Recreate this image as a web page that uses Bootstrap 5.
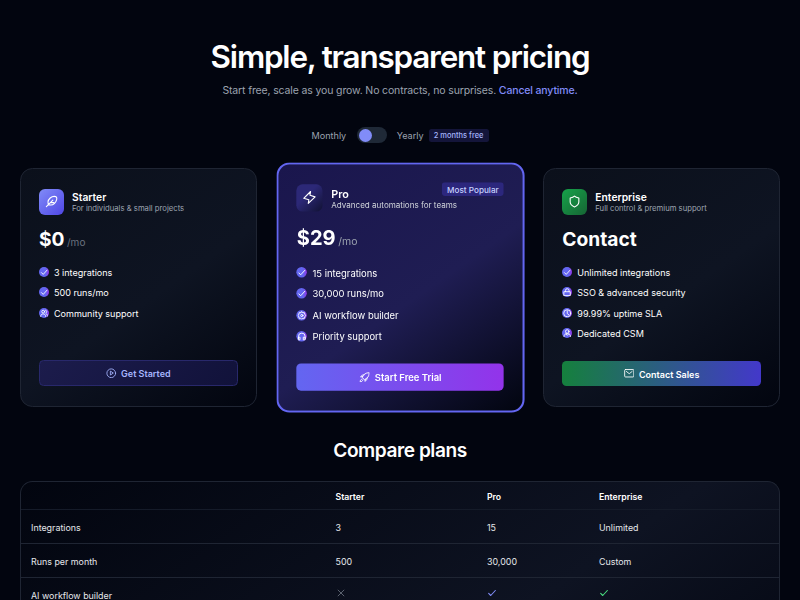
<!DOCTYPE html>
<html lang="en">
<head>
<meta charset="utf-8">
<meta name="viewport" content="width=device-width, initial-scale=1">
<title>Pricing</title>
<link href="https://cdn.jsdelivr.net/npm/bootstrap@5.3.0/dist/css/bootstrap.min.css" rel="stylesheet">
<style>
body{font-family:Inter,"Liberation Sans",sans-serif;background:#02050f;color:#fff;height:600px;font-size:9.4px;line-height:14px}
.page{width:760px}
h1{font-size:31.4px;line-height:38px;font-weight:600;letter-spacing:-1.18px;padding-top:38px}
.intro{font-size:10.5px;line-height:16px;letter-spacing:-.14px;color:#9ca3af;margin-top:7px}
.intro span{color:#818cf8;font-weight:500}
.billing{margin-top:28px;height:16px;font-size:9.1px;color:#9ca3af}
.billing>span:not(.save){padding-top:1px}
.switch{width:30px;height:16px;border-radius:8px;background:#1f2937;padding:1.5px 2px;margin:0 10px 0 10.5px}
.knob{width:13px;height:13px;border-radius:50%;background:#818cf8}
.save{font-size:7.5px;line-height:13px;font-weight:500;color:#a5b4fc;background:#14153a;border-radius:2.5px;padding:0 5px;margin-left:5px}
.plans{display:grid;grid-template-columns:repeat(3,1fr);gap:25px;margin-top:25px}
.plan{height:239px;border:1px solid #1f2533;border-radius:12.5px;background:linear-gradient(145deg,#0b101b 0%,#0e1422 55%,#02050f 100%);padding:20px 18px}
.plan-pro{position:relative;transform:scale(1.047);border:2px solid #6366f1;background:linear-gradient(145deg,#1a164d 0%,#1f1d53 55%,#02050f 100%);padding:19px 17.4px}
.tile{width:25px;height:25.5px;border-radius:6px;margin-right:8px}
.tile svg{width:13px;height:13px}
.t-starter{background:linear-gradient(135deg,#818cf8,#4f46e5)}
.t-pro{background:linear-gradient(135deg,#2c2877 40%,#111233)}
.t-ent{background:linear-gradient(135deg,#16a34a,#166534)}
.plan-name{font-size:10.3px;line-height:13px;font-weight:600;padding-top:2px}
.plan-sub{font-size:7.7px;line-height:10px;color:#9ca3af;padding-top:.3px}
.plan-pro .plan-name{padding-top:2.6px}
.plan-pro .plan-sub{color:#d1d5db}
.price{font-size:19.2px;line-height:24px;height:24px;font-weight:700;margin-top:12px}
.plan-pro .price{margin-top:13.2px}
.price small{font-size:10px;line-height:1;font-weight:400;color:#6b7280;margin-left:2.5px}
.plan-pro .price small{color:#9ca3af}
.feats{margin:15.5px 0 0}
.plan-pro .feats{margin-top:15px}
.feats li{height:20.4px;line-height:14px;font-size:9.02px}
.dot{width:10px;height:10px;border-radius:50%;background:linear-gradient(90deg,#6366f1 65%,#9333ea);margin-right:5px;margin-top:1px;flex:none}
.dot svg{width:8.5px;height:8.5px;stroke-width:2.5}
.cta{height:26px;border-radius:4.5px;font-size:9px;font-weight:600;line-height:14px;width:100%;padding:2px 0 0;color:#fff;border:0}
.cta svg{width:10.5px;height:10.5px;margin-right:4.5px;margin-top:-2px}
.cta-s{background:linear-gradient(135deg,#1c1c4c,#11123a);border:1px solid #28286b;color:#a5b4fc}
.cta-p{background:linear-gradient(90deg,#6366f1,#9333ea)}
.cta-e{background:linear-gradient(90deg,#15803d,#4338ca);height:25px}
.popular{position:absolute;right:17.4px;top:17px;font-size:7.8px;line-height:12px;padding:.5px 5px 0;height:13px;font-weight:500;color:#c7d2fe;background:#2c277d;border-radius:3px}
h2{font-size:19.1px;line-height:24px;font-weight:600;letter-spacing:-.45px;margin:31px 0 19px}
.compare{border:1px solid #1f2533;border-radius:12.5px 12.5px 0 0;border-bottom:0;height:130px;background:linear-gradient(145deg,#02050f 0%,#0e1322 60%,#02050f 100%) 0 0/100% 270px no-repeat}
.line{display:grid;grid-template-columns:304.5px 151.5px 112px 1fr;padding-left:10px;height:34px;padding-top:11px;border-bottom:1px solid #1f2533;font-size:8.9px;line-height:13px;color:#e5e7eb}
.line.head{height:28px;padding-top:8px;line-height:14px;font-weight:600;border-color:#151b29;color:#fff;font-size:8.7px}
svg{fill:none;stroke:currentColor;stroke-width:2;stroke-linecap:round;stroke-linejoin:round}
.line svg{width:10px;height:10px;display:block;margin-top:-1px;stroke-width:2.6}
.line .no svg{stroke:#6b7280;stroke-width:2}
.line .yes-pro svg{stroke:#818cf8}
.line .yes-ent svg{stroke:#4ade80}
</style>
<script src="https://cdn.jsdelivr.net/npm/bootstrap@5.3.0/dist/js/bootstrap.bundle.min.js"></script>
</head>
<body class="overflow-hidden">
<svg class="d-none">
<symbol id="check" viewBox="0 0 24 24"><path d="M4 13l5 5L20 6"/></symbol>
<symbol id="feather" viewBox="0 0 24 24"><path d="M2.500 21.500L14.500 9.500M6 18l-.5-5C6 7 12 2.500 17 2.500c4 0 5.500 2 4.500 6C20 14.500 15 18.500 11 18.500L6 18M10 14h6.500"/></symbol>
<symbol id="bolt" viewBox="0 0 24 24"><path d="M14 1.500L2 13.500l9 2.500-1 6.500L22 11l-9-3z"/></symbol>
<symbol id="shield" viewBox="0 0 24 24"><path d="M12 2c2 2 5 3 8 3.500V13c0 4.500-3.500 7-8 9-4.500-2-8-4.500-8-9V5.500C7 5 10 4 12 2z"/></symbol>
<symbol id="users" viewBox="0 0 24 24"><circle cx="9" cy="7.500" r="4"/><path d="M2 21c0-5 3-7 7-7s7 2 7 7M15.500 3.500c5 0 5 7 1 8M18 14c3 1 4 3 4 6"/></symbol>
<symbol id="gear" viewBox="0 0 24 24"><path d="M12 2l3 2.500 4-.2 1 4 2 3.700-2 3.700-1 4-4-.2L12 22l-3-2.500-4 .2-1-4L2 12l2-3.700 1-4 4 .2z"/><circle cx="12" cy="12" r="3"/></symbol>
<symbol id="phones" viewBox="0 0 24 24"><path d="M3 18v-6a9 9 0 0118 0v6M3 14h4v7H3zM17 14h4v7h-4z"/></symbol>
<symbol id="lock" viewBox="0 0 24 24"><path d="M3.500 10.500h17v11h-17zM7 10V7a5 5 0 0110 0v3"/></symbol>
<symbol id="clock" viewBox="0 0 24 24"><circle cx="12" cy="12" r="10"/><path d="M12 5v8l4 3"/></symbol>
<symbol id="agent" viewBox="0 0 24 24"><circle cx="12" cy="7" r="5"/><path d="M3 21c0-5 3-8 9-8s9 3 9 8M8 14l4 4 4-4"/></symbol>
<symbol id="play" viewBox="0 0 24 24"><circle cx="12" cy="12" r="10"/><path d="M10 8v8l6-4z"/></symbol>
<symbol id="rocket" viewBox="0 0 24 24"><path d="M9 15l-2-3C9.500 6 14 2 22 2c0 8-4 12.500-10 15zM7.500 10.500L3 11.500 7 7l4-.5M13.500 16.500L12.500 21l4.500-4 .5-4M6 16c-3 1-4 3-4 6 3 0 5-1 6-4"/></symbol>
<symbol id="mail" viewBox="0 0 24 24"><rect x="1.500" y="3.500" width="21" height="17" rx="2"/><path d="M5.500 8l6.500 5 6.500-5"/></symbol>
<symbol id="cross" viewBox="0 0 24 24"><path d="M5 5l14 14M19 5L5 19"/></symbol>
</svg>
<main class="page mx-auto">
<header class="text-center">
<h1 class="mb-0">Simple, transparent pricing</h1>
<p class="intro mb-0">Start free, scale as you grow. No contracts, no surprises. <span>Cancel anytime.</span></p>
<div class="billing d-flex justify-content-center align-items-center"><span>Monthly</span><div class="switch"><div class="knob"></div></div><span>Yearly</span><span class="save">2 months free</span></div>
</header>
<section class="plans">
<article class="plan d-flex flex-column">
<div class="d-flex"><div class="tile t-starter d-flex align-items-center justify-content-center"><svg><use href="#feather"/></svg></div><div><div class="plan-name">Starter</div><div class="plan-sub">For individuals &amp; small projects</div></div></div>
<div class="price">$0<small>/mo</small></div>
<ul class="feats list-unstyled">
<li class="d-flex"><span class="dot d-flex align-items-center justify-content-center"><svg><use href="#check"/></svg></span>3 integrations</li>
<li class="d-flex"><span class="dot d-flex align-items-center justify-content-center"><svg><use href="#check"/></svg></span>500 runs/mo</li>
<li class="d-flex"><span class="dot d-flex align-items-center justify-content-center"><svg><use href="#users"/></svg></span>Community support</li>
</ul>
<button class="btn cta cta-s mt-auto d-flex align-items-center justify-content-center"><svg><use href="#play"/></svg>Get Started</button>
</article>
<article class="plan plan-pro d-flex flex-column">
<span class="popular">Most Popular</span>
<div class="d-flex"><div class="tile t-pro d-flex align-items-center justify-content-center"><svg><use href="#bolt"/></svg></div><div><div class="plan-name">Pro</div><div class="plan-sub">Advanced automations for teams</div></div></div>
<div class="price">$29<small>/mo</small></div>
<ul class="feats list-unstyled">
<li class="d-flex"><span class="dot d-flex align-items-center justify-content-center"><svg><use href="#check"/></svg></span>15 integrations</li>
<li class="d-flex"><span class="dot d-flex align-items-center justify-content-center"><svg><use href="#check"/></svg></span>30,000 runs/mo</li>
<li class="d-flex"><span class="dot d-flex align-items-center justify-content-center"><svg><use href="#gear"/></svg></span>AI workflow builder</li>
<li class="d-flex"><span class="dot d-flex align-items-center justify-content-center"><svg><use href="#phones"/></svg></span>Priority support</li>
</ul>
<button class="btn cta cta-p mt-auto d-flex align-items-center justify-content-center"><svg><use href="#rocket"/></svg>Start Free Trial</button>
</article>
<article class="plan d-flex flex-column">
<div class="d-flex"><div class="tile t-ent d-flex align-items-center justify-content-center"><svg><use href="#shield"/></svg></div><div><div class="plan-name">Enterprise</div><div class="plan-sub">Full control &amp; premium support</div></div></div>
<div class="price">Contact</div>
<ul class="feats list-unstyled">
<li class="d-flex"><span class="dot d-flex align-items-center justify-content-center"><svg><use href="#check"/></svg></span>Unlimited integrations</li>
<li class="d-flex"><span class="dot d-flex align-items-center justify-content-center"><svg><use href="#lock"/></svg></span>SSO &amp; advanced security</li>
<li class="d-flex"><span class="dot d-flex align-items-center justify-content-center"><svg><use href="#clock"/></svg></span>99.99% uptime SLA</li>
<li class="d-flex"><span class="dot d-flex align-items-center justify-content-center"><svg><use href="#agent"/></svg></span>Dedicated CSM</li>
</ul>
<button class="btn cta cta-e mt-auto d-flex align-items-center justify-content-center"><svg><use href="#mail"/></svg>Contact Sales</button>
</article>
</section>
<h2 class="text-center">Compare plans</h2>
<section class="compare">
<div class="line head"><span></span><span>Starter</span><span>Pro</span><span>Enterprise</span></div>
<div class="line"><span>Integrations</span><span>3</span><span>15</span><span>Unlimited</span></div>
<div class="line"><span>Runs per month</span><span>500</span><span>30,000</span><span>Custom</span></div>
<div class="line"><span>AI workflow builder</span><span class="no"><svg><use href="#cross"/></svg></span><span class="yes-pro"><svg><use href="#check"/></svg></span><span class="yes-ent"><svg><use href="#check"/></svg></span></div>
</section>
</main>
</body>
</html>
